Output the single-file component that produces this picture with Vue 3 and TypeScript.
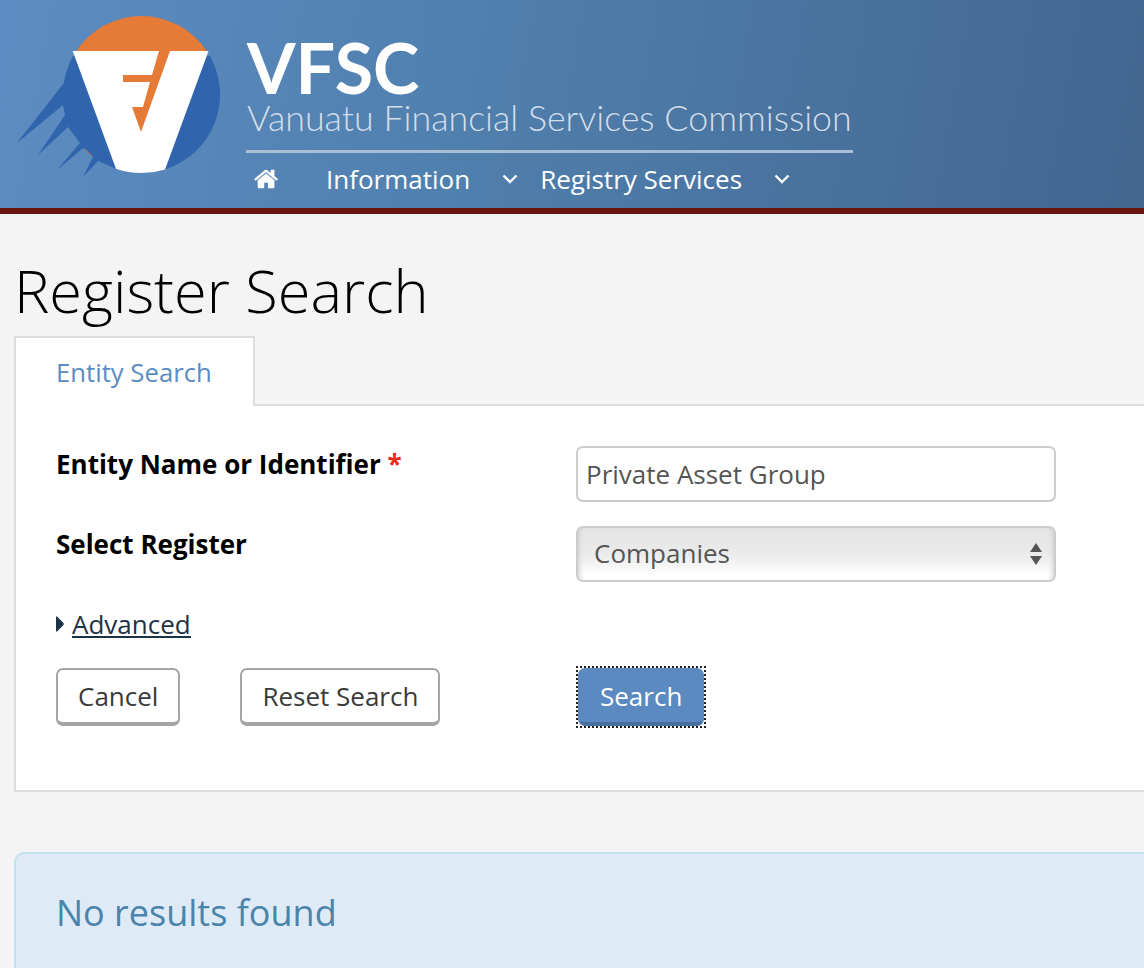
<template>
  <div class="page">
    <header class="site-header">
      <svg class="logo" width="232" height="190" viewBox="0 0 232 190" aria-label="VFSC logo">
        <path d="M76.2 51 A78.5 78.5 0 0 1 206.8 51 Z" fill="#e67a37" />
        <path d="M74.6 56 L73.1 56 A78.5 78.5 0 0 0 63.9 83 L17 143 L63 105 L65 115 L38 155 L68 127 L80 143 L57 170 L83 148 L93 157 L83 177 L98 161 L116 168.7 Z" fill="#3064ad" />
        <path d="M206.6 56 L209.9 56 A78.5 78.5 0 0 1 165 169.4 Z" fill="#3064ad" />
        <path d="M72.7 51 L208.5 51 L165 169.4 A78.5 78.5 0 0 1 116 168.7 Z" fill="#fff" />
        <path d="M159 51 L170 51 L141 132 L132 107 L143 107 L150 82 L123 82 L123 75 L152 75 Z" fill="#e67a37" />
        <path d="M85 149 L92 156" stroke="#b8794f" stroke-width="1" />
      </svg>
      <div class="brand">
        <div class="brand-name">VFSC</div>
        <div class="brand-full">Vanuatu Financial Services Commission</div>
        <nav class="main-nav">
          <a class="nav-home" href="#" aria-label="Home">
            <svg width="26" height="26" viewBox="0 0 1792 1792">
              <path fill="#fff" d="M1408 992v480q0 26-19 45t-45 19h-384v-384h-256v384h-384q-26 0-45-19t-19-45v-480q0-1 .5-3t.5-3l575-474 575 474q1 2 1 6zm223-69l-62 74q-8 9-21 11h-3q-13 0-21-7l-692-577-692 577q-12 8-24 7-13-2-21-11l-62-74q-8-10-7-23.5t11-21.5l719-599q32-26 76-26t76 26l244 204v-195q0-14 9-23t23-9h192q14 0 23 9t9 23v408l219 182q10 8 11 21.5t-7 23.5z" />
            </svg>
          </a>
          <a v-for="item in navItems" :key="item" class="nav-item" href="#">
            <span>{{ item }}</span>
            <svg class="chevron" width="16" height="10" viewBox="0 0 16 10">
              <path d="M1.5 1.5 L8 8 L14.5 1.5" fill="none" stroke="#fff" stroke-width="2.4" />
            </svg>
          </a>
        </nav>
      </div>
    </header>

    <main class="content">
      <h1>Register Search</h1>
      <div class="tabs">
        <a class="tab" href="#">Entity Search</a>
      </div>
      <form class="panel" @submit.prevent>
        <div class="field">
          <label for="entity">Entity Name or Identifier <span class="req">*</span></label>
          <input id="entity" v-model="entity" type="text" />
        </div>
        <div class="field">
          <label for="register">Select Register</label>
          <div class="select-wrap">
            <select id="register" v-model="register">
              <option>Companies</option>
            </select>
            <svg class="updown" width="14" height="24" viewBox="0 0 14 24">
              <path d="M7 1 L13 10 L1 10 Z M1 14 L13 14 L7 23 Z" fill="#555" />
            </svg>
          </div>
        </div>
        <a class="advanced" href="#">
          <svg width="8" height="16" viewBox="0 0 8 16"><path d="M0 1 Q0 0 1 .5 L7.5 7 Q8 8 7.5 9 L1 15.5 Q0 16 0 15 Z" fill="#1d3245" /></svg>
          <span>Advanced</span>
        </a>
        <div class="actions">
          <div class="actions-left">
            <button type="button" class="btn">Cancel</button>
            <button type="button" class="btn">Reset Search</button>
          </div>
          <span class="focus-ring">
            <button type="submit" class="btn btn-primary">Search</button>
          </span>
        </div>
      </form>
      <div class="alert">No results found</div>
    </main>
  </div>
</template>

<script setup lang="ts">
import { ref } from 'vue'

const navItems = ['Information', 'Registry Services']
const entity = ref('Private Asset Group')
const register = ref('Companies')
</script>

<style>
html,
body {
  background: #f4f4f4;
  overflow: hidden;
}
</style>

<style scoped>
.page {
  font-family: "Open Sans", "Noto Sans", sans-serif;
  font-size: 26px;
  color: #000;
  height: 968px;
  overflow: hidden;
}

.site-header {
  display: flex;
  height: 208px;
  background: linear-gradient(100deg, #5d8cc2 0%, #5080ae 40%, #426690 100%);
  border-bottom: 6px solid #6b1510;
}

.logo {
  flex: none;
  margin: 0 14px 0 0;
}

.brand {
  width: 607px;
  display: flex;
  flex-direction: column;
}

.brand-name {
  font-family: Lato, sans-serif;
  font-weight: 700;
  font-size: 70px;
  line-height: 66px;
  margin-top: 34px;
  color: #fff;
  padding-left: 1px;
}

.brand-full {
  font-family: Lato, sans-serif;
  font-weight: 300;
  font-size: 35.8px;
  line-height: 36px;
  color: #d4deea;
  white-space: nowrap;
  padding-left: 1px;
}

.main-nav {
  display: flex;
  align-items: center;
  margin-top: 14px;
  border-top: 3px solid #a9bdd4;
  height: 54px;
  box-sizing: border-box;
}

.main-nav a {
  color: #fff;
  text-decoration: none;
}

.nav-home {
  display: flex;
  margin-left: 8px;
  margin-right: 46px;
}

.nav-item {
  display: flex;
  align-items: center;
  line-height: 36px;
  white-space: nowrap;
}

.chevron {
  margin-left: 32px;
  margin-right: 22px;
}

.content {
  padding-left: 14px;
}

h1 {
  font-weight: 300;
  font-size: 59.5px;
  line-height: 82px;
  margin: 35px 0 5px 0;
  color: #000;
}

.tabs {
  display: flex;
  margin-bottom: -2px;
  position: relative;
}

.tab {
  display: block;
  width: 241px;
  height: 70px;
  box-sizing: border-box;
  padding: 17px 0 0 40px;
  background: #fff;
  border: 2px solid #ddd;
  border-bottom: none;
  color: #5a8bc3;
  text-decoration: none;
  line-height: 36px;
  font-size: 25.7px;
}

.panel {
  background: #fff;
  border: 2px solid #ddd;
  border-right: none;
  box-sizing: border-box;
  height: 388px;
  padding: 40px 88px 0 40px;
}

.field {
  display: grid;
  grid-template-columns: 520px 480px;
  height: 56px;
  margin-bottom: 24px;
}

label {
  font-weight: 700;
  line-height: 37px;
}

.req {
  color: #e8291c;
}

input,
select {
  font: inherit;
  color: #555;
  width: 100%;
  height: 56px;
  box-sizing: border-box;
  border: 2px solid #ccc;
  border-radius: 7px;
  background: #fff;
  outline: none;
}

input {
  padding: 0 8px;
}

.select-wrap {
  position: relative;
}

select {
  appearance: none;
  padding: 0 16px 2px;
  background: linear-gradient(180deg, #e4e4e4 0%, #ebebeb 50%, #fff 92%);
  box-shadow: inset 5px 0 5px -4px #ccc, inset -5px 0 5px -4px #ccc;
}

.updown {
  position: absolute;
  right: 13px;
  top: 16px;
}

.advanced {
  display: flex;
  align-items: center;
  gap: 8px;
  color: #1d3245;
  line-height: 36px;
  width: max-content;
  margin-top: 6px;
}

.advanced span {
  text-decoration: underline;
}

.actions {
  display: grid;
  grid-template-columns: 520px auto;
  margin-top: 26px;
}

.actions-left {
  display: flex;
  gap: 60px;
}

.btn {
  font: inherit;
  height: 58px;
  padding: 0 20px;
  box-sizing: border-box;
  color: #3a3a3a;
  background: #fff;
  border: 2px solid #a5a5a5;
  border-bottom-width: 4px;
  border-radius: 7px;
}

.focus-ring {
  width: max-content;
  height: 62px;
  margin-top: -2px;
  box-sizing: border-box;
  border: 2px dotted #222;
  display: flex;
  background: #fff;
}

.btn-primary {
  color: #fff;
  background: #5a8abf;
  border-color: #5a8abf;
  border-bottom-color: #48709f;
}

.alert {
  margin-top: 60px;
  height: 140px;
  box-sizing: border-box;
  padding: 34px 40px;
  background: #deebf6;
  border: 2px solid #c0e2ef;
  border-right: none;
  border-radius: 10px 0 0 10px;
  color: #4a84ab;
  font-size: 36px;
  line-height: 50px;
}
</style>
